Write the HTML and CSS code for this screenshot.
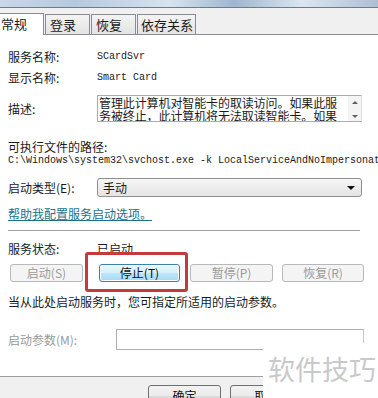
FILE: index.html
```html
<!DOCTYPE html>
<html lang="zh">
<head>
    <meta charset="UTF-8">
    <title>Smart Card 的属性</title>
    <link rel="stylesheet" href="styles.css">
</head>
<body>
    <div class="dialog">
        <div class="titlebar"></div>

        <div class="tabstrip">
            <div class="tab active">常规</div>
            <div class="tab">登录</div>
            <div class="tab">恢复</div>
            <div class="tab wide">依存关系</div>
        </div>

        <div class="page">
            <div class="row first">
                <span class="label">服务名称:</span>
                <span class="mono">SCardSvr</span>
            </div>
            <div class="row">
                <span class="label">显示名称:</span>
                <span class="mono">Smart Card</span>
            </div>

            <div class="row desc-row">
                <span class="label">描述:</span>
                <div class="desc-box">
                    <div class="desc-text">管理此计算机对智能卡的取读访问。如果此服务被终止，此计算机将无法取读智能卡。如果</div>
                    <div class="scroll">
                        <span class="arrow up"></span>
                        <span class="arrow down"></span>
                    </div>
                </div>
            </div>

            <div class="path-label">可执行文件的路径:</div>
            <div class="mono path">C:\Windows\system32\svchost.exe -k LocalServiceAndNoImpersonation</div>

            <div class="row select-row">
                <span class="label">启动类型(E):</span>
                <div class="select">
                    <span>手动</span>
                    <span class="caret"></span>
                </div>
            </div>

            <a class="help-link" href="#">帮助我配置服务启动选项。</a>

            <div class="separator"></div>

            <div class="row status-row">
                <span class="label">服务状态:</span>
                <span>已启动</span>
            </div>

            <div class="buttons">
                <button class="btn btn-start" disabled>启动(S)</button>
                <button class="btn btn-stop focused">停止(T)</button>
                <button class="btn btn-pause" disabled>暂停(P)</button>
                <button class="btn btn-resume" disabled>恢复(R)</button>
            </div>

            <p class="note">当从此处启动服务时，您可指定所适用的启动参数。</p>

            <div class="row params-row">
                <span class="label disabled">启动参数(M):</span>
                <div class="params-input"></div>
            </div>
        </div>

        <div class="footer">
            <button class="btn btn-footer">确定</button>
            <button class="btn btn-footer">取消</button>
        </div>

        <!-- 截图上的标注和水印 -->
        <div class="highlight"></div>
        <div class="watermark">软件技巧</div>
    </div>
</body>
</html>
```

FILE: styles.css
```css
:root {
    --dialog-bg: #f0f0f0;
    --border: #898c95;
    --text: #1a1a1a;
    --disabled: #9a9a9a;
    --link: #1f6f8b;
}

body {
    margin: 0;
    padding: 0;
    font-family: "Noto Sans CJK SC", "Noto Sans", sans-serif;
    font-size: 12px;
    color: var(--text);
    background: #fff;
}

.dialog {
    width: 378px;
    height: 398px;
    position: relative;
    overflow: hidden;
    background: var(--dialog-bg);
}

.titlebar {
    height: 7px;
    background: linear-gradient(90deg, #c9d8e8 0%, #b5c9de 20%, #d7e3ef 45%, #9fb6cf 62%, #dbe6f1 80%, #aebfd2 100%);
    border-bottom: 1px solid #6d7b8a;
}

/* 选项卡 */
.tabstrip {
    height: 26px;
    display: flex;
    align-items: flex-end;
    border-bottom: 1px solid var(--border);
}

.tab {
    width: 45px;
    height: 20px;
    line-height: 20px;
    box-sizing: border-box;
    padding-left: 4px;
    margin-left: 1px;
    border: 1px solid var(--border);
    border-bottom: none;
    background: linear-gradient(#f4f4f4, #e3e3e3);
    font-size: 13px;
    white-space: nowrap;
}

.tab.wide {
    width: 59px;
    padding-left: 3px;
}

.tab.active {
    width: 44px;
    height: 22px;
    padding-left: 1px;
    margin-left: 0;
    background: #fff;
    border-left: none;
    margin-bottom: -1px;
}

.page {
    background: #fff;
    padding: 14px 0 26px 8px;
    border-bottom: 1px solid #a0a0a0;
    overflow: hidden;
}

.row {
    display: flex;
    align-items: center;
    line-height: 16px;
    margin-top: 5px;
}

.row.first {
    margin-top: 0;
}

.label {
    width: 89px;
    flex: none;
}

.label.disabled {
    color: var(--disabled);
    width: 108px;
}

.mono {
    font-family: "Liberation Mono", monospace;
    font-size: 10px;
}

.desc-row {
    margin-top: 9px;
}

.desc-box {
    width: 265px;
    height: 27px;
    box-sizing: border-box;
    border: 1px solid #a5acb5;
    border-right-color: #dbdfe6;
    display: flex;
}

.desc-text {
    flex: 1;
    font-size: 12px;
    line-height: 13px;
    padding-left: 1px;
    overflow: hidden;
    letter-spacing: -0.1px;
}

.scroll {
    width: 13px;
    background: #f4f4f4;
    display: flex;
    flex-direction: column;
    justify-content: space-between;
    align-items: center;
    padding: 5px 0 3px;
}

.arrow {
    width: 0;
    height: 0;
    border-left: 3px solid transparent;
    border-right: 3px solid transparent;
}

.arrow.up {
    border-bottom: 3px solid #606060;
}

.arrow.down {
    border-top: 3px solid #606060;
}

.path-label {
    margin-top: 17px;
    line-height: 16px;
}

.path {
    line-height: 12px;
    white-space: nowrap;
}

.select-row {
    margin-top: 11px;
}

.select {
    width: 265px;
    height: 19px;
    box-sizing: border-box;
    border: 1px solid #8e8f8f;
    border-radius: 3px;
    background: linear-gradient(#f6f6f6, #e4e4e4);
    display: flex;
    align-items: center;
    justify-content: space-between;
    padding: 0 6px 0 5px;
}

.caret {
    width: 0;
    height: 0;
    border-left: 4px solid transparent;
    border-right: 4px solid transparent;
    border-top: 4px solid #111;
}

.help-link {
    display: inline-block;
    margin-top: 9px;
    line-height: 16px;
    color: var(--link);
    text-decoration: underline;
}

.separator {
    margin-top: 8px;
    width: 352px;
    height: 1px;
    background: #a0a0a0;
}

.status-row {
    margin-top: 10px;
}

.buttons {
    display: flex;
    margin-top: 7px;
    padding-left: 2px;
}

.btn {
    height: 18px;
    box-sizing: border-box;
    border: 1px solid #707070;
    border-radius: 3px;
    background: linear-gradient(#f2f2f2 0%, #ebebeb 50%, #dddddd 51%, #cfcfcf 100%);
    font-family: "Noto Sans CJK SC", sans-serif;
    font-size: 12px;
    line-height: 14px;
    color: #111;
    padding: 0;
}

.btn:disabled {
    border-color: #b5b9bc;
    background: #f4f4f4;
    color: var(--disabled);
}

.btn.focused {
    border-color: #3c7fb1;
    background: linear-gradient(#eaf6fd 0%, #d9f0fc 50%, #bee6fd 51%, #a7d9f5 100%);
    box-shadow: inset 0 0 0 1px #fff;
}

.btn-start { width: 73px; }
.btn-stop { width: 81px; margin-left: 16px; }
.btn-pause { width: 83px; margin-left: 10px; }
.btn-resume { width: 82px; margin-left: 9px; }

.note {
    margin: 12px 0 0;
    line-height: 16px;
}

.params-row {
    margin-top: 19px;
}

.params-input {
    width: 248px;
    height: 21px;
    box-sizing: border-box;
    border: 1px solid #abadb3;
    border-right-color: #c8c8c8;
}

.footer {
    display: flex;
    padding: 8px 0 0 148px;
    gap: 9px;
}

.btn-footer {
    width: 73px;
    height: 22px;
}

.highlight {
    position: absolute;
    left: 85px;
    top: 252px;
    width: 103px;
    height: 40px;
    box-sizing: border-box;
    border: 3px solid #c33b3b;
    border-radius: 3px;
}

.watermark {
    position: absolute;
    left: 263px;
    top: 343px;
    width: 115px;
    height: 55px;
    background: #fff;
    color: #c9c9c9;
    font-size: 27px;
    line-height: 52px;
    padding-left: 5px;
    box-sizing: border-box;
    white-space: nowrap;
}
```
